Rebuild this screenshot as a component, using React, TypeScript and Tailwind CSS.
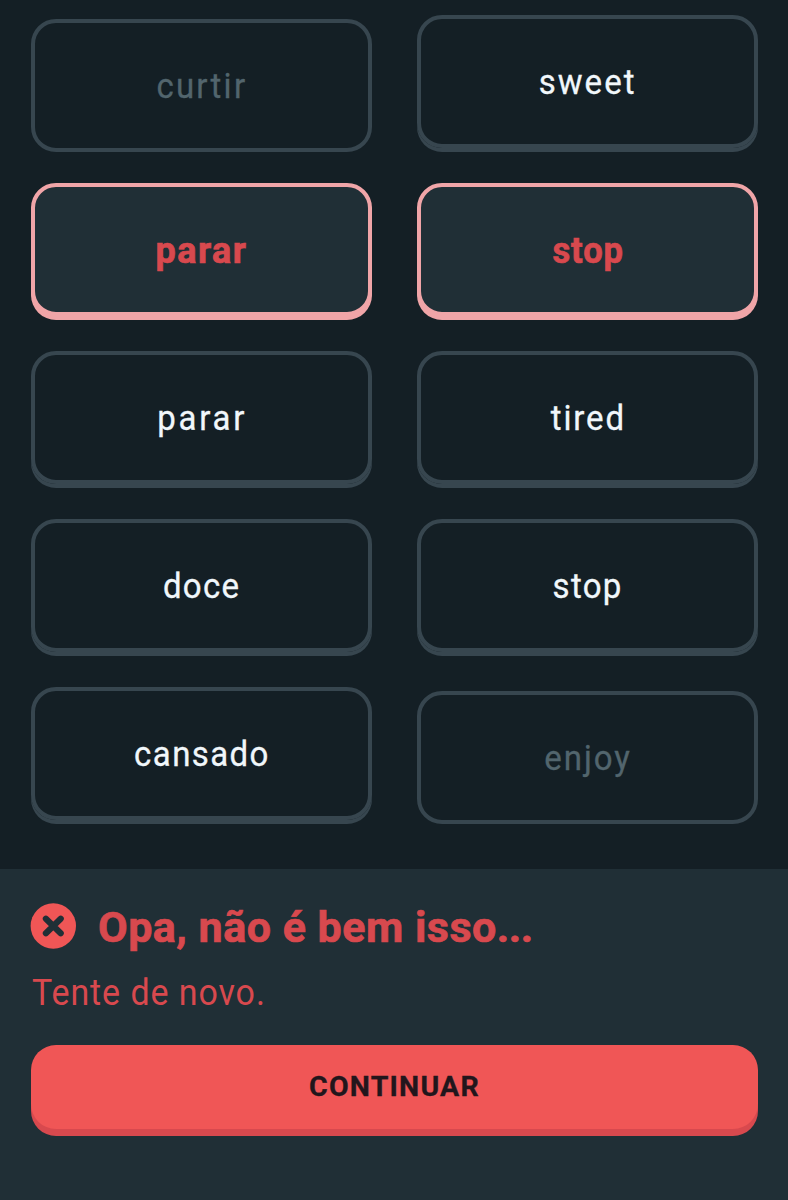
import { useState } from "react";

type CardState = "idle" | "wrong" | "matched";

interface WordCard {
  word: string;
  state: CardState;
  text: string;
}

const rows: [WordCard, WordCard][] = [
  [
    { word: "curtir", state: "matched", text: "scale-x-[0.93] tracking-[2.4px]" },
    { word: "sweet", state: "idle", text: "scale-x-[0.93] pl-px tracking-[2.2px]" },
  ],
  [
    { word: "parar", state: "wrong", text: "tracking-[1.5px]" },
    { word: "stop", state: "wrong", text: "scale-x-[0.96] pl-px tracking-[0.9px]" },
  ],
  [
    { word: "parar", state: "idle", text: "scale-x-[0.93] pl-px tracking-[2.9px]" },
    { word: "tired", state: "idle", text: "scale-x-[0.93] pl-px tracking-[2px]" },
  ],
  [
    { word: "doce", state: "idle", text: "scale-x-[0.93] tracking-[1.4px]" },
    { word: "stop", state: "idle", text: "scale-x-[0.93] pl-px tracking-[1.4px]" },
  ],
  [
    { word: "cansado", state: "idle", text: "scale-x-[0.93] tracking-[1.5px]" },
    { word: "enjoy", state: "matched", text: "scale-x-[0.93] pl-px tracking-[2.1px]" },
  ],
];

const cardStyles: Record<CardState, string> = {
  idle: "mb-1 border-[#37464f] text-[35.5px] text-[#f1f7fb] shadow-[0_4px_0_#37464f] [-webkit-text-stroke:0.3px]",
  wrong:
    "mb-1 border-[#f0a5a8] bg-[#202f36] text-[36px] font-bold text-[#d8494e] shadow-[0_4px_0_#f0a5a8] [-webkit-text-stroke:0.7px]",
  matched: "mt-1 border-[#37464f] text-[35.5px] text-[#52656d] [-webkit-text-stroke:0.3px]",
};

function Card({ card, onPress }: { card: WordCard; onPress: () => void }) {
  return (
    <button
      type="button"
      onClick={onPress}
      disabled={card.state === "matched"}
      className={`flex h-[133px] w-[341px] items-center justify-center rounded-[25px] border-4 pt-[2px] leading-none ${cardStyles[card.state]}`}
    >
      <span className={card.text}>{card.word}</span>
    </button>
  );
}

export default function App() {
  const [, setSelected] = useState<string | null>(null);

  return (
    <div className="flex h-[1200px] w-[788px] flex-col overflow-hidden bg-[#141f25] font-['Roboto',sans-serif]">
      <main className="flex h-[869px] flex-col gap-[31px] pt-[15px] pl-[31px]">
        {rows.map((row, i) => (
          <div key={i} className="flex gap-[45px]">
            {row.map((card) => (
              <Card key={card.word} card={card} onPress={() => setSelected(card.word)} />
            ))}
          </div>
        ))}
      </main>
      <footer className="flex flex-1 flex-col bg-[#202f36] pr-[30px] pl-[31px] text-[#d8494e]">
        <div className="-ml-px flex items-start gap-[22px] pt-[34px]">
          <svg viewBox="0 0 46 46" className="size-[46px]" aria-hidden="true">
            <circle cx="23.3" cy="23" r="22.7" fill="#f05656" />
            <path
              d="M15.9 15.7 30.7 30.3M30.7 15.7 15.9 30.3"
              stroke="#202f36"
              strokeWidth="6.2"
              strokeLinecap="round"
            />
          </svg>
          <h1 className="pt-px text-[43px] leading-[46px] font-bold tracking-[0.5px] [-webkit-text-stroke:0.7px]">
            Opa, não é bem isso<span className="tracking-[-0.5px]">...</span>
          </h1>
        </div>
        <p className="mt-[20px] origin-left scale-x-[0.93] pl-px text-[36.5px] leading-[46px] tracking-[1px]">
          Tente de novo.
        </p>
        <button
          type="button"
          className="mt-[29px] flex h-[84px] items-center justify-center rounded-[25px] bg-[#f05656] pt-px text-[28.5px] font-bold tracking-[1.2px] text-[#22161c] shadow-[0_7px_0_#d8494e] [-webkit-text-stroke:0.3px]"
        >
          CONTINUAR
        </button>
      </footer>
    </div>
  );
}
